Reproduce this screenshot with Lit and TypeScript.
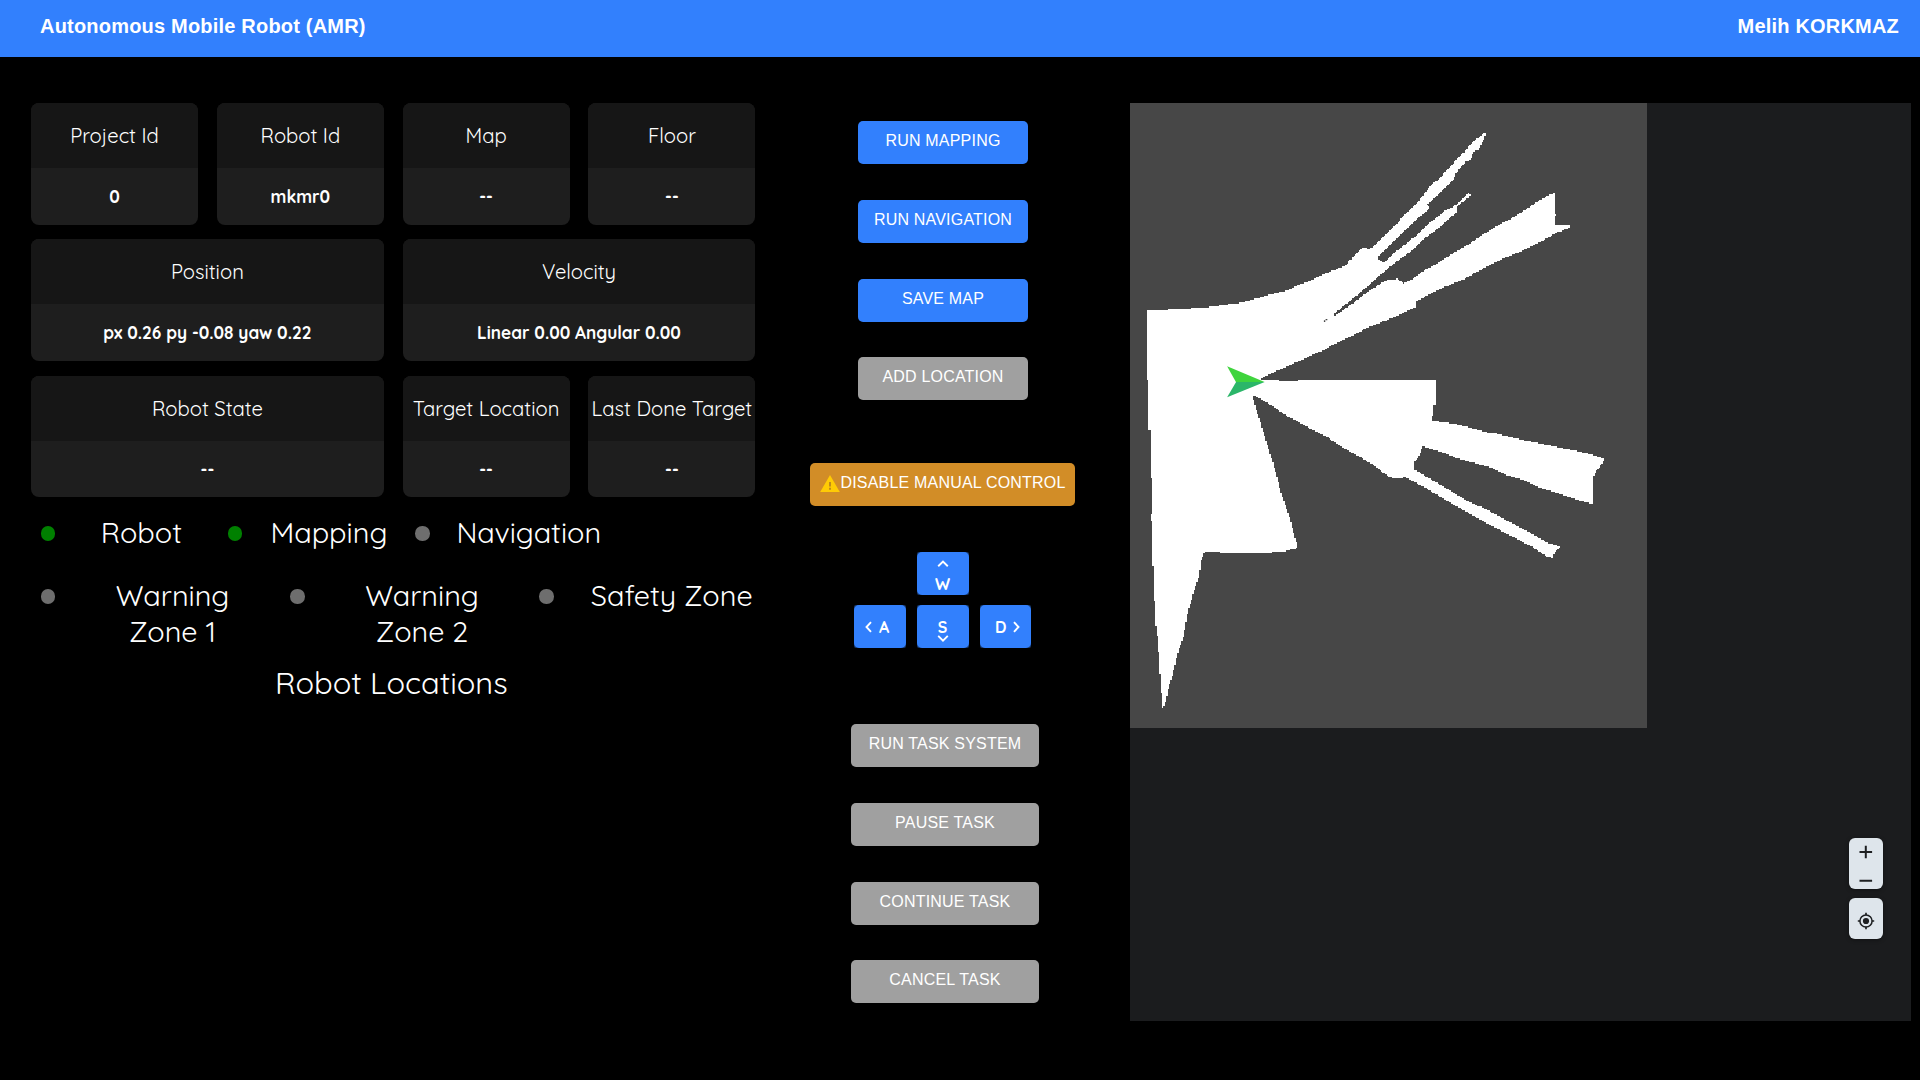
import { LitElement, html, css, svg } from "lit";
import { customElement, property } from "lit/decorators.js";
import { classMap } from "lit/directives/class-map.js";

interface Info {
  label: string;
  value: string;
  wide?: boolean;
}

const INFOS: Info[] = [
  { label: "Project Id", value: "0" },
  { label: "Robot Id", value: "mkmr0" },
  { label: "Map", value: "--" },
  { label: "Floor", value: "--" },
  { label: "Position", value: "px 0.26 py -0.08 yaw 0.22", wide: true },
  { label: "Velocity", value: "Linear 0.00 Angular 0.00", wide: true },
  { label: "Robot State", value: "--", wide: true },
  { label: "Target Location", value: "--" },
  { label: "Last Done Target", value: "--" },
];

// Free space seen by the laser scanner, clockwise from the top-left corner.
const FREE_SPACE = `
78,661 135,661 137,657 207,656 209,653 256,651 258,648 310,646 314,642 346,639 368,634 395,626
440,612 485,601 515,586 545,575 600,549 658,526 662,514 672,508 680,496 704,473 716,474 722,478
735,471 767,437 790,415 825,377 868,332 892,300 896,292 935,258 940,248 970,218 975,208 1000,187
1018,162 1040,143 1059,126 1062,130 1055,150 1040,180 1028,184 1018,210 1005,213 975,250 970,267
935,302 915,320 905,334 890,343 900,352 850,400 800,448 750,500 751,508 764,518 775,512 800,486
850,445 900,398 945,362 975,345 1012,310 1018,314 1014,322 998,334 976,352 980,368 965,378 930,410
885,445 850,480 812,508 770,542 720,588 680,622 619,674 625,676 640,666 680,637 720,605 772,571
798,570 804,566 825,580 850,566 885,540 920,521 970,487 1010,465 1050,436 1100,405 1145,380
1200,343 1240,318 1261,310 1262,372 1267,374 1262,378 1262,404 1275,406 1282,403 1287,407
1297,404 1310,408 1300,415 1260,432 1230,450 1150,490 1100,511 1050,538 1000,567 940,592 900,612
858,636 856,651 800,680 720,712 660,745 625,762 585,783 550,798 510,818 480,832 440,850 410,866
404,870 462,870 464,874 515,874 517,870 916,870 916,945 911,947 910,975 905,977 906,992 985,1004
1060,1026 1090,1030 1170,1050 1250,1067 1330,1084 1380,1096 1408,1108 1395,1128 1382,1142
1376,1158 1375,1242 1355,1238 1300,1220 1215,1191 1170,1170 1120,1155 1075,1132 980,1105 930,1085
880,1069 865,1105 852,1119 852,1137 900,1167 960,1203 1010,1234 1060,1256 1120,1290 1180,1322
1240,1358 1262,1364 1278,1372 1262,1385 1256,1405 1240,1400 1190,1367 1130,1335 1070,1303
1000,1262 930,1221 880,1190 835,1165 825,1162 815,1165 795,1165 780,1160 740,1128 700,1103
650,1075 600,1040 560,1020 520,997 480,975 440,946 400,922 386,916 390,940 410,1005 440,1105
456,1160 470,1215 490,1275 503,1325 516,1373 490,1380 475,1385 440,1387 438,1390 290,1390
288,1385 246,1386 236,1408 230,1460 215,1505 198,1560 185,1640 170,1680 155,1745 140,1795
130,1845 123,1856 120,1810 115,1740 110,1650 103,1600 99,1510 98,1432 94,1430 94,1294 89,1290
94,1260 94,1170 89,1160 89,1023 84,1022 83,875 78,865`;

const CELL = 4;

/** Fills the outline on the occupancy grid: one run of cells per row and span. */
function toGridPath(outline: string): string {
  const pts = outline.trim().split(/\s+/).map((p) => p.split(",").map(Number));
  let d = "";
  for (let y = 125; y < 1860; y += CELL) {
    const mid = y + CELL / 2;
    const xs: number[] = [];
    pts.forEach(([x1, y1], i) => {
      const [x2, y2] = pts[(i + 1) % pts.length];
      if (y1 <= mid !== y2 <= mid) xs.push(x1 + ((mid - y1) / (y2 - y1)) * (x2 - x1));
    });
    xs.sort((a, b) => a - b);
    for (let i = 0; i + 1 < xs.length; i += 2) {
      const from = 78 + Math.round((xs[i] - 78) / CELL) * CELL;
      const to = 78 + Math.round((xs[i + 1] - 78) / CELL) * CELL;
      if (to > from) d += `M${from} ${y}H${to}V${y + CELL}H${from}Z`;
    }
  }
  return d;
}

const GRID_PATH = toGridPath(FREE_SPACE);

@customElement("info-card")
export class InfoCard extends LitElement {
  @property() label = "";
  @property() value = "";

  static styles = css`
    :host {
      display: block;
      min-width: 0;
    }
    .card {
      height: 121.7px;
      display: grid;
      grid-template-rows: 65px 1fr;
      border-radius: 8px;
      overflow: hidden;
      background: #1e1e1e;
      text-align: center;
      white-space: nowrap;
    }
    .head {
      background: #161616;
      font-size: 20.2px;
      font-weight: 375;
      line-height: 65px;
    }
    .value {
      font-size: 17.2px;
      font-weight: 700;
      line-height: 57px;
    }
  `;

  render() {
    return html`<div class="card">
      <div class="head">${this.label}</div>
      <div class="value">${this.value}</div>
    </div>`;
  }
}

@customElement("status-light")
export class StatusLight extends LitElement {
  @property() label = "";
  @property({ type: Boolean }) on = false;

  static styles = css`
    :host {
      display: flex;
      align-items: flex-start;
      font-size: 28.8px;
      font-weight: 380;
      line-height: 36px;
    }
    .dot {
      flex: none;
      width: 14.5px;
      height: 14.5px;
      margin-top: 12.3px;
      border-radius: 50%;
      background: #6e6e6e;
    }
    .dot.on {
      background: #008000;
    }
    .label {
      flex: 1;
      text-align: center;
      padding: 0 var(--label-inset, 0);
    }
  `;

  render() {
    return html`<span class=${classMap({ dot: true, on: this.on })}></span><span class="label">${this.label}</span>`;
  }
}

@customElement("robot-map")
export class RobotMap extends LitElement {
  static styles = css`
    :host {
      display: block;
      position: relative;
      height: 918px;
      background: #1b1c1e;
    }
    .map {
      display: block;
      width: 517px;
      height: 625px;
      background: #474747;
    }
    .controls {
      position: absolute;
      right: 28px;
      top: 735px;
      width: 34px;
      display: grid;
      gap: 9px;
    }
    .box {
      display: block;
      border-radius: 6px;
      background: #dee5eb;
      box-shadow: 0 1px 4px rgba(0, 0, 0, 0.4);
    }
  `;

  render() {
    return html`
      <svg class="map" viewBox="29 39 1501.2 1875" preserveAspectRatio="none">
        ${svg`<path d=${GRID_PATH} fill="#fff" shape-rendering="crispEdges" />
          <path d="M592 691h4v5h-4zM597 687h5v4h-5z" fill="#474747" />
          <path d="M311 829L420 876L337 877Z" fill="#3fd43d" />
          <path d="M337 876L420 876L311 922Z" fill="#2bb669" />`}
      </svg>
      <div class="controls">
        <svg class="box" width="34" height="51" viewBox="0 0 34 51" stroke="#1d1f21" stroke-width="2" fill="none">
          <path d="M10.5 14h12.6M16.8 7.7v12.6M10.5 42.7h12.6" />
        </svg>
        <svg class="box" width="34" height="41" viewBox="0 0 34 41" stroke="#1d1f21" fill="none">
          <circle cx="17" cy="23" r="6.1" stroke-width="1.5" />
          <circle cx="17" cy="23" r="3.1" fill="#1d1f21" stroke="none" />
          <path d="M17 14.8v2.4M17 28.8v2.4M8.8 23h2.4M22.8 23h2.4" stroke-width="1.7" />
        </svg>
      </div>
    `;
  }
}

@customElement("app-root")
export class AppRoot extends LitElement {
  static styles = css`
    :host {
      display: block;
      min-height: 1080px;
      background: #000;
      color: #fff;
      font-family: Quicksand, Lato, sans-serif;
    }
    .bar {
      box-sizing: border-box;
      height: 57px;
      padding: 0 21px 5px 40px;
      display: flex;
      align-items: center;
      justify-content: space-between;
      background: #3280fd;
      font: 700 20px "Liberation Sans", Arial, sans-serif;
      letter-spacing: 0.2px;
    }
    .main {
      display: grid;
      grid-template-columns: 724px 1fr 781px;
      padding: 46px 9px 0 31px;
    }
    .cards {
      display: grid;
      grid-template-columns: repeat(4, 167px);
      gap: 14.6px 18.8px;
    }
    .wide {
      grid-column: span 2;
    }
    .lights {
      display: grid;
      margin-left: 9.5px;
    }
    .modes {
      grid-template-columns: 187.3px 187.7px 212px;
      margin-top: 16.9px;
    }
    .zones {
      grid-template-columns: 249.6px 249.4px 250px;
      margin-top: 27px;
      margin-right: -30px;
    }
    .zone {
      --label-inset: 50px;
    }
    .safety {
      --label-inset: 20px;
    }
    .locations {
      margin: 15px 3.5px 0 0;
      text-align: center;
      font-size: 30.8px;
      font-weight: 380;
      line-height: 38px;
    }
    .controls {
      display: flex;
      flex-direction: column;
      align-items: center;
      padding: 18px 0 0 1px;
    }
    .group {
      display: grid;
      grid-template-columns: 170px;
      gap: 35.8px;
    }
    .tasks {
      grid-template-columns: 188px;
      margin: 76px 0 0 4px;
    }
    .btn {
      box-sizing: border-box;
      height: 43px;
      padding: 0 0 3px;
      border: 0;
      border-radius: 5px;
      background: #3280fd;
      color: #fff;
      display: flex;
      align-items: center;
      justify-content: center;
      font: 400 16px "Liberation Sans", Arial, sans-serif;
      letter-spacing: 0.2px;
      white-space: nowrap;
    }
    .off {
      background: #a0a0a0;
    }
    .manual {
      width: 265px;
      margin: 62.6px 1px 0 0;
      padding-left: 1px;
      background: #d28d27;
    }
    .warn {
      margin: 2px 0 0;
    }
    .keys {
      display: grid;
      grid-template-columns: 52px 52px 51px;
      gap: 10px 11px;
      margin: 46px 2px 0 0;
    }
    .key {
      display: block;
      height: 43px;
      padding: 0;
      border: 0;
      border-radius: 2px;
      background: #17396f;
      color: #fff;
      font: 700 16px/16px Quicksand, Lato, sans-serif;
    }
    .face {
      box-sizing: border-box;
      height: 43px;
      display: flex;
      align-items: center;
      border-radius: 5px;
      background: #3280fd;
    }
    .face svg {
      fill: none;
      stroke: #fff;
      stroke-width: 1.9;
    }
    .w {
      grid-column: 2;
    }
    .a {
      grid-column: 1;
    }
    .w .face {
      flex-direction: column;
      gap: 9px;
      padding-top: 8px;
    }
    .a .face {
      gap: 7px;
      padding: 1px 0 0 11.5px;
    }
    .s .face {
      flex-direction: column;
      padding-top: 14px;
    }
    .d .face {
      gap: 7px;
      padding: 1px 0 0 15.5px;
    }
  `;

  render() {
    return html`
      <header class="bar"><span>Autonomous Mobile Robot (AMR)</span><span>Melih KORKMAZ</span></header>
      <main class="main">
        <section>
          <div class="cards">
            ${INFOS.map(
              (i) => html`<info-card
                class=${classMap({ wide: !!i.wide })}
                .label=${i.label}
                .value=${i.value}
              ></info-card>`,
            )}
          </div>
          <div class="lights modes">
            <status-light label="Robot" on></status-light>
            <status-light label="Mapping" on></status-light>
            <status-light label="Navigation"></status-light>
          </div>
          <div class="lights zones">
            <status-light class="zone" label="Warning Zone 1"></status-light>
            <status-light class="zone" label="Warning Zone 2"></status-light>
            <status-light class="safety" label="Safety Zone"></status-light>
          </div>
          <div class="locations">Robot Locations</div>
        </section>
        <section class="controls">
          <div class="group">
            <button class="btn">RUN MAPPING</button>
            <button class="btn">RUN NAVIGATION</button>
            <button class="btn">SAVE MAP</button>
            <button class="btn off">ADD LOCATION</button>
          </div>
          <button class="btn manual">
            <svg class="warn" width="20" height="17" viewBox="0 0 20 17">
              <path d="M10 0L19.8 17H0.2Z" fill="#ffcb05" />
              <path d="M10 7v4.6M10 12.7v2" stroke="#c08a1c" stroke-width="2" />
            </svg>
            DISABLE MANUAL CONTROL
          </button>
          <div class="keys">
            <button class="key w">
              <span class="face"
                ><svg width="12" height="7" viewBox="0 0 12 7"><path d="M1.2 6.2L6 1.5L10.8 6.2" /></svg
                ><span>W</span></span
              >
            </button>
            <button class="key a">
              <span class="face"
                ><svg width="7" height="12" viewBox="0 0 7 12"><path d="M6 1.2L1.5 6L6 10.8" /></svg
                ><span>A</span></span
              >
            </button>
            <button class="key s">
              <span class="face"
                ><span>S</span
                ><svg width="12" height="7" viewBox="0 0 12 7"><path d="M1.2 0.9L6 5.6L10.8 0.9" /></svg
              ></span>
            </button>
            <button class="key d">
              <span class="face"
                ><span>D</span
                ><svg width="7" height="12" viewBox="0 0 7 12"><path d="M1 1.2L5.5 6L1 10.8" /></svg
              ></span>
            </button>
          </div>
          <div class="group tasks">
            <button class="btn off">RUN TASK SYSTEM</button>
            <button class="btn off">PAUSE TASK</button>
            <button class="btn off">CONTINUE TASK</button>
            <button class="btn off">CANCEL TASK</button>
          </div>
        </section>
        <robot-map></robot-map>
      </main>
    `;
  }
}
